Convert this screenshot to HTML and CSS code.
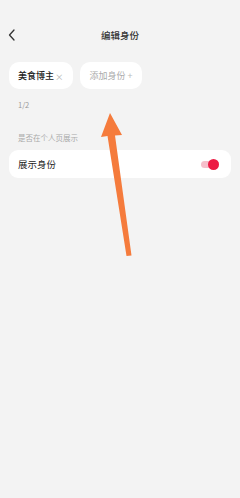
FILE: index.html
```html
<!DOCTYPE html>
<html lang="zh">
<head>
<meta charset="utf-8">
<link rel="stylesheet" href="styles.css">
</head>
<body>
<div class="page">
  <header class="nav">
    <svg class="back" width="8" height="12" viewBox="0 0 8 12"><path d="M6 1 L1.5 6 L6 11" fill="none" stroke="#333" stroke-width="1.3" stroke-linecap="round" stroke-linejoin="round"/></svg>
    <div class="title">编辑身份</div>
  </header>
  <div class="chips">
    <div class="chip"><span class="chip-text">美食博主</span><span class="x">×</span></div>
    <div class="chip add"><span>添加身份</span><span class="plus">+</span></div>
  </div>
  <div class="count">1/2</div>
  <div class="section">是否在个人页展示</div>
  <div class="row">
    <span class="row-text">展示身份</span>
    <div class="toggle"><div class="knob"></div></div>
  </div>
  <svg class="arrow" width="240" height="498" viewBox="0 0 240 498">
    <polygon points="110,91 101,115 107.5,114 126.5,234 131.5,233.5 115,113.5 122,113" fill="#f57b3c"/>
  </svg>
</div>
</body>
</html>
```
FILE: styles.css
```css
html, body { margin: 0; padding: 0; }
body {
  background: #f3f3f3;
  font-family: "Noto Sans CJK SC", "Noto Sans", sans-serif;
  width: 240px;
  height: 498px;
  overflow: hidden;
}
.page { position: relative; width: 240px; height: 498px; }
.nav {
  position: relative;
  height: 26px;
  margin-top: 22px;
  display: flex;
  align-items: center;
  justify-content: center;
}
.back { position: absolute; left: 8px; top: 7px; }
.title { font-size: 9.5px; font-weight: 500; color: #333; }
.chips {
  display: flex;
  gap: 7px;
  padding: 14px 0 0 9px;
}
.chip {
  height: 27px;
  background: #fff;
  border-radius: 10px;
  display: flex;
  align-items: center;
  padding: 0 9px 0 9px;
  font-size: 9px;
  box-sizing: border-box;
}
.chip-text { color: #222; font-weight: 500; }
.x { color: #bbb; margin-left: 1px; font-size: 8.5px; }
.chip.add { color: #aaa; padding: 0 9px 0 10px; }
.plus { margin-left: 2px; color: #bbb; }
.count { font-size: 7.5px; color: #999; padding: 11px 0 0 18px; line-height: 10px; }
.section { font-size: 7.5px; color: #aaa; padding: 23px 0 0 18px; line-height: 10px; }
.row {
  margin: 7px 9px 0 9px;
  height: 28px;
  background: #fff;
  border-radius: 9px;
  display: flex;
  align-items: center;
  justify-content: space-between;
  padding: 0 12px 0 9px;
}
.row-text { font-size: 9.5px; color: #222; }
.toggle {
  position: relative;
  width: 18px;
  height: 7px;
  border-radius: 4px;
  background: #f6bfcb;
}
.knob {
  position: absolute;
  right: 0;
  top: -2px;
  width: 11px;
  height: 11px;
  border-radius: 50%;
  background: #ec1a43;
}
.arrow { position: absolute; left: 0; top: 0; pointer-events: none; }
```
